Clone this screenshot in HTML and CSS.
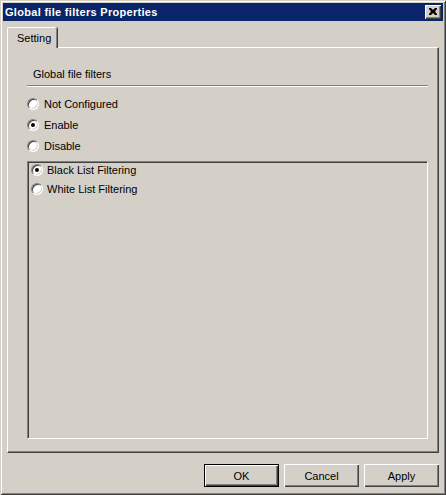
FILE: index.html
```html
<!DOCTYPE html>
<html>
<head>
<meta charset="utf-8">
<title>Global file filters Properties</title>
<link rel="stylesheet" href="styles.css">
</head>
<body>
<div class="window">
  <div class="titlebar">
    <span class="title">Global file filters Properties</span>
    <div class="close">
      <svg width="8" height="7" viewBox="0 0 8 7"><path d="M0 0h2l2 2 2-2h2v1l-2 2.5 2 2.5v1h-2l-2-2-2 2h-2v-1l2-2.5-2-2.5z" fill="#000"/></svg>
    </div>
  </div>
  <div class="body">
    <div class="tabs">
      <div class="tab">Setting</div>
      <div class="tab-rest"></div>
    </div>
    <div class="panel">
      <div class="group-label">Global file filters</div>
      <div class="sep"></div>
      <div class="radios">
        <div class="row"><span class="radio"></span><span>Not Configured</span></div>
        <div class="row"><span class="radio checked"></span><span>Enable</span></div>
        <div class="row"><span class="radio"></span><span>Disable</span></div>
      </div>
      <div class="listbox">
        <div class="lrow"><span class="radio checked"></span><span>Black List Filtering</span></div>
        <div class="lrow"><span class="radio"></span><span>White List Filtering</span></div>
      </div>
    </div>
    <div class="buttons">
      <div class="btn default"><span>OK</span></div>
      <div class="btn"><span>Cancel</span></div>
      <div class="btn"><span>Apply</span></div>
    </div>
  </div>
</div>
</body>
</html>
```
FILE: styles.css
```css
* { box-sizing: border-box; }
html, body { margin: 0; padding: 0; background: #d4d0c8; }
body { font-family: "Liberation Sans", Arial, sans-serif; font-size: 11px; color: #000; }

.window {
  width: 446px;
  height: 495px;
  background: #d4d0c8;
  padding: 3px;
  display: flex;
  flex-direction: column;
  box-shadow: inset 1px 1px #d4d0c8, inset -1px -1px #404040, inset 2px 2px #fff, inset -2px -2px #808080;
}

.titlebar {
  height: 18px;
  background: #0a246a;
  display: flex;
  align-items: center;
  justify-content: space-between;
  padding: 0 2px 0 2px;
}
.title {
  color: #fff;
  font-weight: bold;
  font-size: 11px;
  letter-spacing: 0.3px;
}
.close {
  width: 16px;
  height: 14px;
  background: #d4d0c8;
  display: flex;
  align-items: center;
  justify-content: center;
  box-shadow: inset 1px 1px #fff, inset -1px -1px #404040, inset -2px -2px #808080;
  padding-bottom: 1px;
}

.body {
  flex: 1;
  display: flex;
  flex-direction: column;
  padding: 6px 4px 5px 4px;
}

.tabs {
  display: flex;
  height: 20px;
}
.tab {
  width: 50px;
  height: 21px;
  padding: 4px 0 0 9px;
  line-height: 13px;
  border-left: 1px solid #fff;
  border-top: 1px solid #fff;
  border-radius: 2px 2px 0 0;
  box-shadow: inset -1px 0 #808080, 1px 0 #404040;
  background: #d4d0c8;
  position: relative;
  z-index: 1;
}
.tab-rest { flex: 1; }

.panel {
  height: 406px;
  border-top: 1px solid #fff;
  border-left: 1px solid #fff;
  border-right: 1px solid #404040;
  border-bottom: 1px solid #404040;
  box-shadow: inset -1px -1px #808080;
  padding: 20px 10px 0 19px;
  display: flex;
  flex-direction: column;
}

.group-label {
  line-height: 13px;
  padding-left: 6px;
}
.sep {
  height: 2px;
  margin-top: 4px;
  border-top: 1px solid #808080;
  border-bottom: 1px solid #fff;
}

.radios {
  display: flex;
  flex-direction: column;
  margin-top: 6px;
}
.row {
  display: flex;
  align-items: center;
  height: 21px;
  gap: 5px;
}

.radio {
  width: 12px;
  height: 12px;
  flex: none;
  border-radius: 50%;
  background: #fff;
  border: 1px solid;
  border-color: #808080 #fff #fff #808080;
  box-shadow: inset 1px 1px #404040, inset -1px -1px #d4d0c8;
  display: flex;
  align-items: center;
  justify-content: center;
}
.radio.checked::after {
  content: "";
  width: 4px;
  height: 4px;
  border-radius: 50%;
  background: #000;
}

.listbox {
  margin-top: 5px;
  height: 278px;
  border-top: 1px solid #808080;
  border-left: 1px solid #808080;
  border-right: 1px solid #fff;
  border-bottom: 1px solid #fff;
  box-shadow: inset 1px 1px #404040, inset -1px -1px #d4d0c8;
  padding: 1px 0 0 3px;
  display: flex;
  flex-direction: column;
  gap: 6px;
}
.lrow {
  display: flex;
  align-items: center;
  height: 13px;
  gap: 4px;
}

.buttons {
  margin-top: 11px;
  display: flex;
  justify-content: flex-end;
  gap: 5px;
}
.btn {
  width: 75px;
  height: 23px;
  display: flex;
  align-items: center;
  justify-content: center;
  background: #d4d0c8;
  box-shadow: inset 1px 1px #fff, inset -1px -1px #404040, inset -2px -2px #808080;
}
.btn.default {
  border: 1px solid #000;
  box-shadow: inset 1px 1px #fff, inset -1px -1px #404040, inset -2px -2px #808080;
}
```
